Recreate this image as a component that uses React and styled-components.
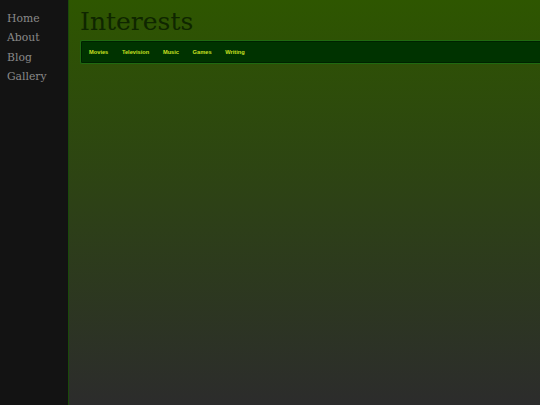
import React from "react";
import styled, { createGlobalStyle } from "styled-components";

const Global = createGlobalStyle`
  html, body {
    margin: 0;
    padding: 0;
    overflow: hidden;
    background: #131313;
  }
`;

const Page = styled.div`
  display: flex;
  width: 540px;
  height: 405px;
  overflow: hidden;
`;

const Sidebar = styled.nav`
  display: flex;
  flex-direction: column;
  flex: 0 0 69px;
  padding: 9px 0 0 7px;
  box-sizing: border-box;
  background: #131313;
  border-right: 1px solid #1a4a0a;
`;

const SideLink = styled.a`
  font-family: "DejaVu Serif", serif;
  font-size: 10.8px;
  line-height: 19.3px;
  color: #8a8a8a;
  text-decoration: none;
`;

const Main = styled.main`
  flex: 1;
  display: flex;
  flex-direction: column;
  padding: 4px 0 0 11px;
  background: linear-gradient(#2e5600 0%, #2c2c2c 100%);
`;

const Title = styled.h1`
  margin: 0;
  font-family: "DejaVu Serif", serif;
  font-weight: normal;
  font-size: 25px;
  line-height: 36px;
  color: #0f2600;
`;

const MenuBar = styled.div`
  display: flex;
  align-items: center;
  gap: 13.6px;
  width: 480px;
  height: 24px;
  padding-left: 8px;
  box-sizing: border-box;
  background: #003300;
  border: 1px solid #1f6a10;
  border-right: none;
  border-radius: 2px 0 0 2px;
  box-shadow: inset 0 0 0 1px #002200;
`;

const MenuItem = styled.a`
  font-family: "Liberation Sans", Arial, sans-serif;
  font-weight: bold;
  font-size: 5.7px;
  color: #c8e020;
  text-decoration: none;
`;

const links = ["Home", "About", "Blog", "Gallery"];
const menu = ["Movies", "Television", "Music", "Games", "Writing"];

export default function App() {
  return (
    <>
      <Global />
      <Page>
        <Sidebar>
          {links.map((l) => (
            <SideLink key={l} href="#">{l}</SideLink>
          ))}
        </Sidebar>
        <Main>
          <Title>Interests</Title>
          <MenuBar>
            {menu.map((m) => (
              <MenuItem key={m} href="#">{m}</MenuItem>
            ))}
          </MenuBar>
        </Main>
      </Page>
    </>
  );
}
